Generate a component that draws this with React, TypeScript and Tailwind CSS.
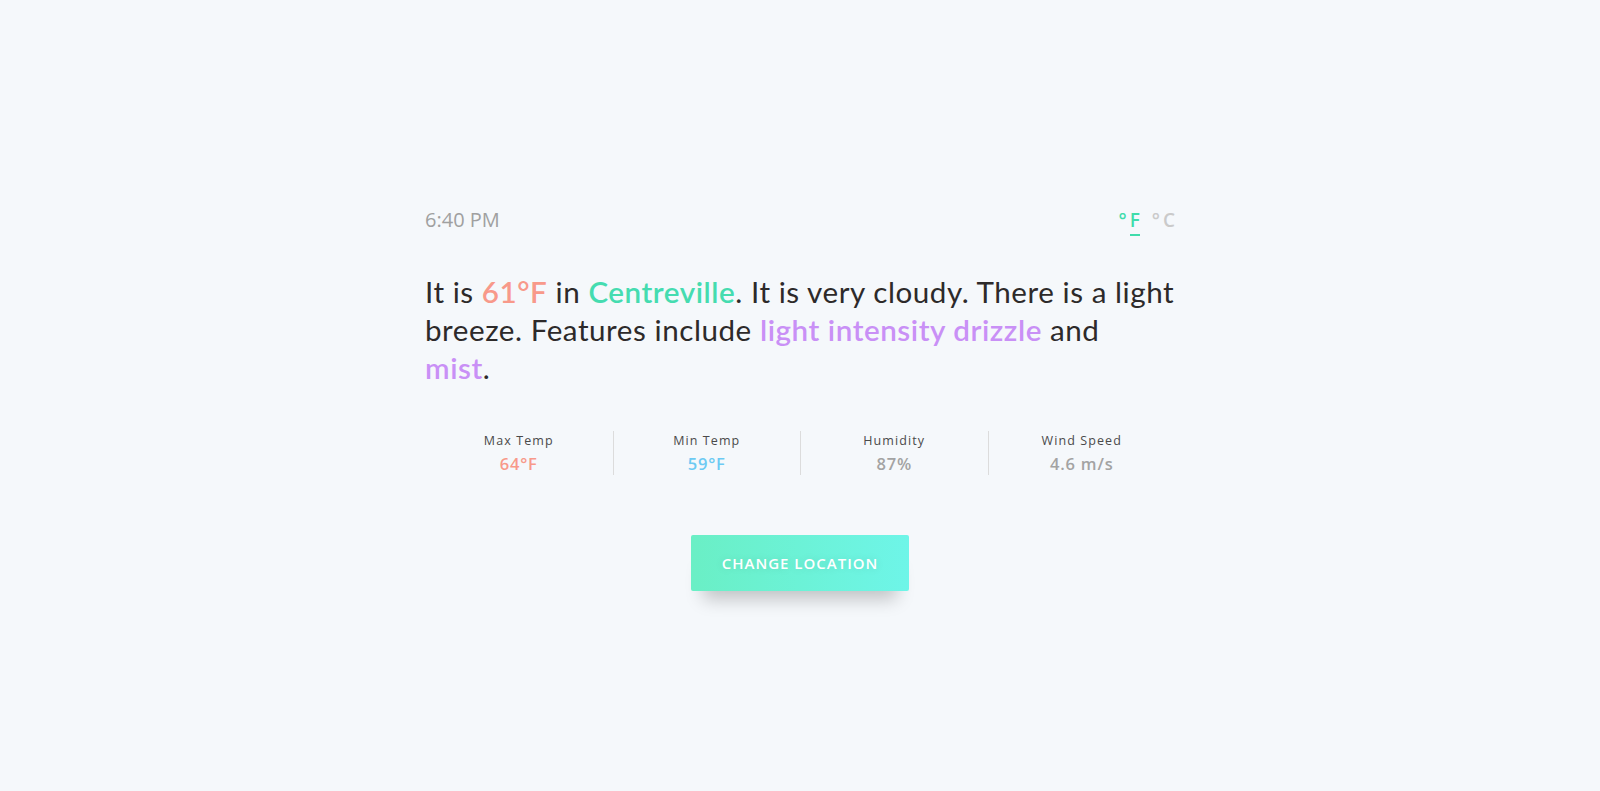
const stats = [
  { label: 'Max Temp', value: '64°F', color: 'text-[#f8998a]' },
  { label: 'Min Temp', value: '59°F', color: 'text-[#6ccaf3]' },
  { label: 'Humidity', value: '87%', color: 'text-[#a3a3a3]' },
  { label: 'Wind Speed', value: '4.6 m/s', color: 'text-[#a3a3a3]' },
];

const App = () => {
  return (
    <div className="min-h-screen bg-[#f5f8fb] font-['Open_Sans',sans-serif]">
      <div className="w-[750px] mx-auto pt-[207px]">
        <div className="flex justify-between items-center h-[26px]">
          <p className="text-[20px] text-[#a0a0a0]">6:40 PM</p>
          <div className="flex gap-[12px] text-[19px] font-semibold leading-[24px]">
            <span className="text-[#3fdcab]">
              °<span className="ml-[3px] border-b-2 border-[#3fdcab] pb-[1px]">F</span>
            </span>
            <span className="text-[#cacaca]">
              °<span className="ml-[3px]">C</span>
            </span>
          </div>
        </div>

        <p className="mt-[40px] text-[29.6px] leading-[38px] tracking-[0.55px] text-[#2d2a2a] font-['Lato',sans-serif]">
          It is <span className="text-[#f8998a] font-semibold">61°F</span> in{' '}
          <span className="text-[#45dcb0] font-semibold">Centreville</span>. It is very cloudy. There is a light
          <br />
          breeze. Features include{' '}
          <span className="text-[#c990f6] font-semibold">light intensity drizzle</span> and
          <br />
          <span className="text-[#c990f6] font-semibold">mist</span>.
        </p>

        <div className="mt-[44px] grid grid-cols-4">
          {stats.map((s, i) => (
            <div
              key={s.label}
              className={'flex flex-col items-center h-[44px] ' + (i > 0 ? 'border-l border-[#dcdcdc]' : '')}
            >
              <span className="text-[12.5px] leading-[20px] tracking-[1.1px] text-[#4a4a4a]">{s.label}</span>
              <span className={'text-[16.5px] leading-[26px] tracking-[0.8px] font-semibold ' + s.color}>
                {s.value}
              </span>
            </div>
          ))}
        </div>

        <div className="mt-[60px] flex justify-center">
          <button className="w-[218px] h-[56px] rounded-[2px] bg-gradient-to-r from-[#6aefc5] to-[#6ef5e8] text-white text-[15px] font-semibold tracking-[1px] shadow-[0_20px_18px_-12px_rgba(0,0,0,0.22)] [text-shadow:0_0_8px_rgba(0,0,0,0.12)]">
            CHANGE LOCATION
          </button>
        </div>
      </div>
    </div>
  );
};

export default App;
